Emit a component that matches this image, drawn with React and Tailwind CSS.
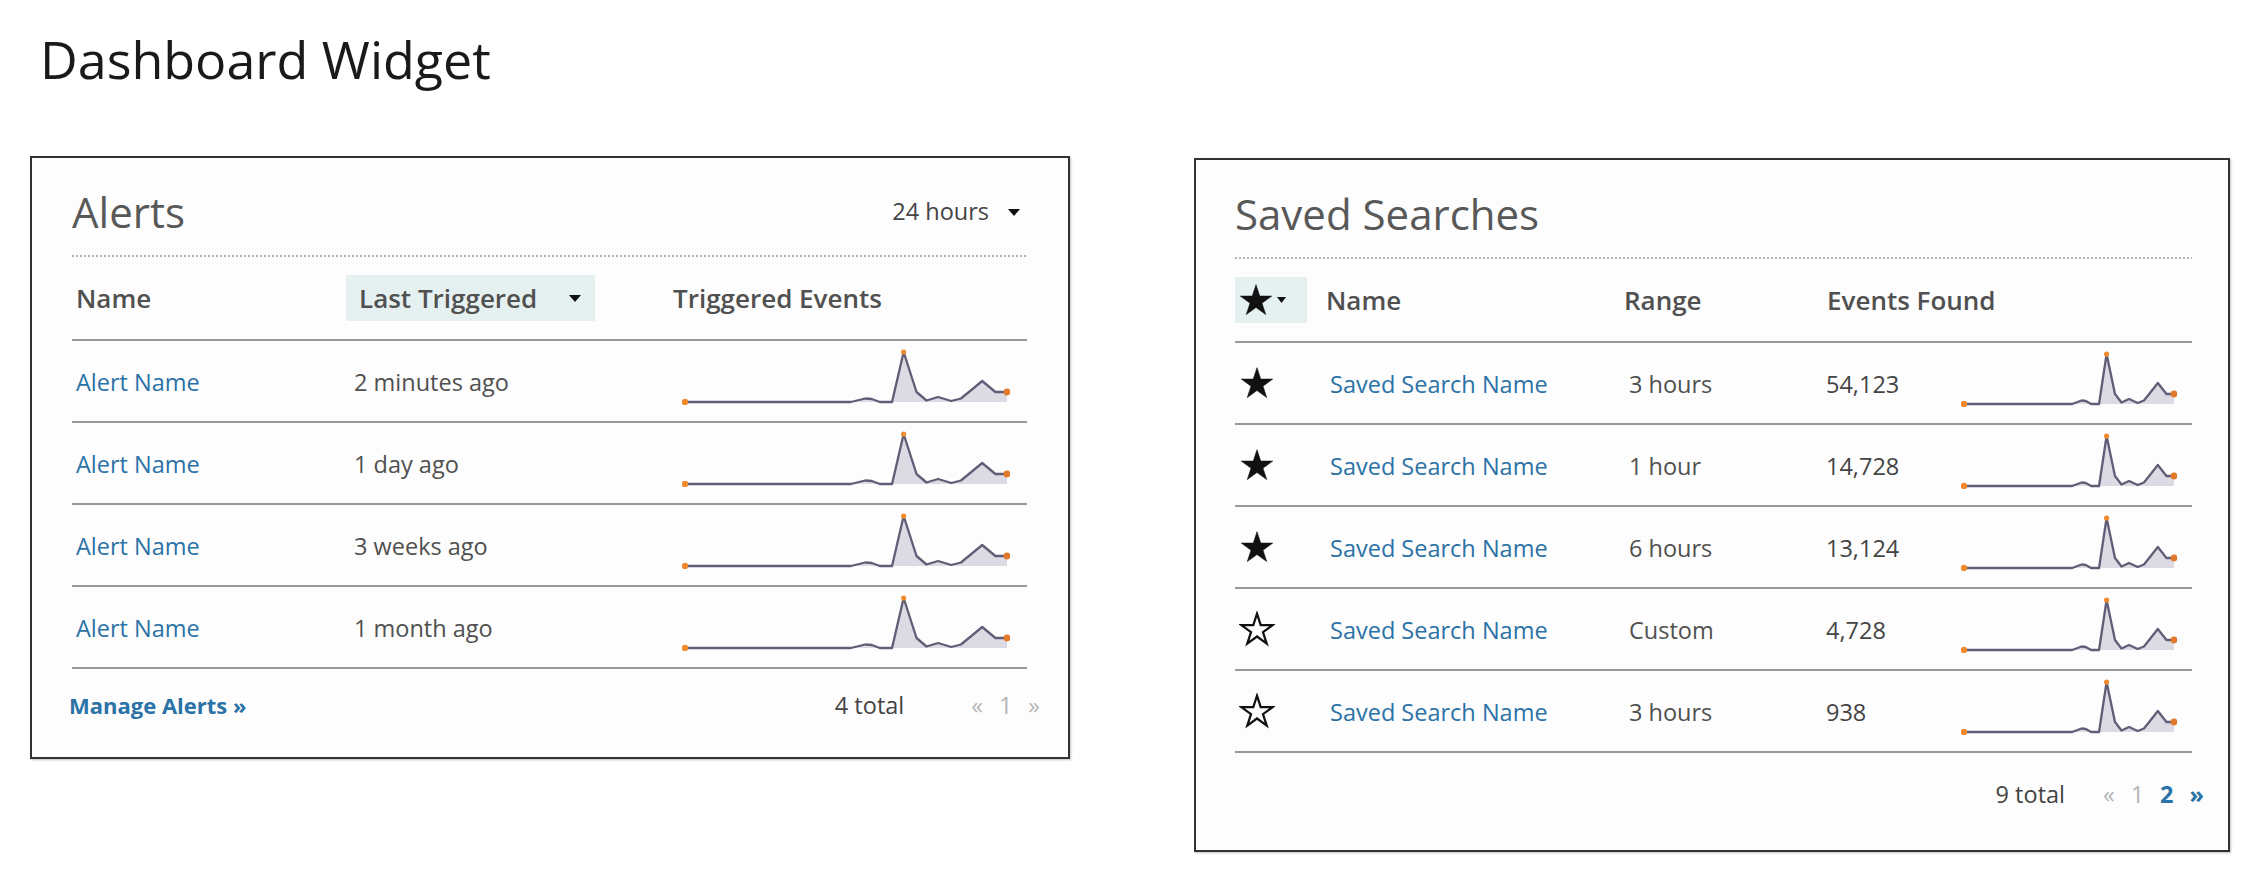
import React from 'react';

const SPARK = [
  [0, 1], [0.515, 1], [0.56, 0.93], [0.58, 0.94], [0.605, 1], [0.643, 1],
  [0.679, 0], [0.719, 0.8], [0.75, 0.97], [0.786, 0.9], [0.827, 0.98],
  [0.857, 0.93], [0.893, 0.74], [0.923, 0.58], [0.964, 0.8], [1, 0.8],
];

function Sparkline({ width }) {
  const h = 56;
  const pts = SPARK.map(([x, y]) => [3 + x * (width - 6), 3 + y * (h - 6)]);
  const line = pts.map((p) => p.join(',')).join(' ');
  const base = h - 3;
  const fill = `${pts[0][0]},${base} ${line} ${pts[pts.length - 1][0]},${base}`;
  const peak = pts[6];
  const end = pts[pts.length - 1];
  return (
    <svg width={width} height={h} viewBox={`0 0 ${width} ${h}`}>
      <polygon points={fill} fill="#dcdae2" />
      <polyline points={line} fill="none" stroke="#615d77" strokeWidth="2.3" strokeLinejoin="round" />
      <circle cx={pts[0][0]} cy={pts[0][1]} r="3.2" fill="#f08a2c" />
      <circle cx={peak[0]} cy={peak[1]} r="2.6" fill="#f08a2c" />
      <circle cx={end[0]} cy={end[1]} r="3.4" fill="#e2782a" />
    </svg>
  );
}

function Caret({ small }) {
  return small ? (
    <svg width="9" height="6" viewBox="0 0 9 6">
      <path d="M0 0h9L4.5 6z" fill="#111" />
    </svg>
  ) : (
    <svg width="12" height="7" viewBox="0 0 12 7">
      <path d="M0 0h12L6 7z" fill="#111" />
    </svg>
  );
}

function Star({ filled, size = 36 }) {
  return (
    <svg width={size} height={size} viewBox="0 0 24 24">
      <path
        d="M12 1.8L14.47 9.4L22.46 9.4L15.99 14.1L18.47 21.7L12 17L5.53 21.7L8.01 14.1L1.54 9.4L9.53 9.4Z"
        fill={filled ? '#111' : 'none'}
        stroke="#111"
        strokeWidth={filled ? 0.4 : 1.5}
        strokeLinejoin="miter"
      />
    </svg>
  );
}

function Dotted() {
  return <div className="mt-[22px] h-[2px] bg-[linear-gradient(to_right,#b3b3b3_2px,transparent_2px)] bg-[length:4px_2px] bg-repeat-x" />;
}

const alerts = ['2 minutes ago', '1 day ago', '3 weeks ago', '1 month ago'];

function AlertsWidget() {
  return (
    <div className="w-[1040px] border-2 border-[#333] bg-[#fdfdfd] pl-[40px] pr-[41px] pt-[33px] pb-[36px] shadow-[1px_1px_2px_rgba(0,0,0,0.25)]">
      <div className="flex items-center justify-between">
        <h2 className="text-[42px] leading-none text-[#585858]">Alerts</h2>
        <button className="flex items-center gap-[19px] pr-[7px] text-[23.5px] text-[#444]">
          24 hours <Caret />
        </button>
      </div>
      <Dotted />
      <div className="flex h-[84px] items-center border-b-2 border-[#999] text-[26px] font-semibold text-[#505050]">
        <div className="w-[274px] pl-[4px]">Name</div>
        <div className="flex h-[46px] w-[249px] items-center justify-between bg-[#e5f1f1] pl-[13px] pr-[14px]">
          Last Triggered <Caret />
        </div>
        <div className="pl-[78px]">Triggered Events</div>
      </div>
      {alerts.map((t) => (
        <div key={t} className="flex h-[82px] border-b-2 border-[#999] text-[23.5px]">
          <div className="flex w-[274px] items-center pl-[4px] pt-[3px] text-[#2b72a7]">Alert Name</div>
          <div className="flex w-[327px] items-center pl-[8px] pt-[3px] text-[#505050]">{t}</div>
          <div className="flex items-end pb-[16px] pl-[9px]">
            <Sparkline width={328} />
          </div>
        </div>
      ))}
      <div className="flex items-center pt-[20px] text-[23.5px] leading-[32px]">
        <a className="-ml-[3px] text-[22px] font-bold text-[#2b72a7]">Manage Alerts »</a>
        <span className="ml-auto text-[#444]">4 total</span>
        <div className="-mr-[13px] ml-[67px] flex gap-[16px] text-[#b5b5b5]">
          <span>«</span>
          <span>1</span>
          <span>»</span>
        </div>
      </div>
    </div>
  );
}

const searches = [
  { fav: true, range: '3 hours', count: '54,123' },
  { fav: true, range: '1 hour', count: '14,728' },
  { fav: true, range: '6 hours', count: '13,124' },
  { fav: false, range: 'Custom', count: '4,728' },
  { fav: false, range: '3 hours', count: '938' },
];

function SavedSearchesWidget() {
  return (
    <div className="ml-[124px] mt-[2px] w-[1036px] border-2 border-[#333] bg-[#fdfdfd] pl-[39px] pr-[36px] pt-[33px] pb-[40px] shadow-[1px_1px_2px_rgba(0,0,0,0.25)]">
      <h2 className="text-[42px] leading-none text-[#585858]">Saved Searches</h2>
      <Dotted />
      <div className="flex h-[84px] items-center border-b-2 border-[#999] text-[26px] font-semibold text-[#505050]">
        <div className="flex h-[46px] w-[72px] items-center gap-[3px] bg-[#e5f1f1] pl-[3px]">
          <Star filled size={36} />
          <Caret small />
        </div>
        <div className="w-[304px] pl-[19px]">Name</div>
        <div className="w-[205px] pl-[13px]">Range</div>
        <div className="pl-[11px]">Events Found</div>
      </div>
      {searches.map((s, i) => (
        <div key={i} className="flex h-[82px] border-b-2 border-[#999] text-[23.5px]">
          <div className="flex w-[72px] items-center pl-[4px]">
            <Star filled={s.fav} />
          </div>
          <div className="flex w-[304px] items-center pl-[23px] pt-[3px] text-[#2b72a7]">Saved Search Name</div>
          <div className="flex w-[205px] items-center pl-[18px] pt-[3px] text-[#505050]">{s.range}</div>
          <div className="flex w-[145px] items-center pl-[10px] pt-[3px] text-[#444]">{s.count}</div>
          <div className="flex items-end pb-[16px]">
            <Sparkline width={216} />
          </div>
        </div>
      ))}
      <div className="flex items-center justify-end pt-[25px] text-[23.5px] leading-[32px]">
        <span className="text-[#444]">9 total</span>
        <div className="-mr-[12px] ml-[38px] flex gap-[16px]">
          <span className="text-[#b5b5b5]">«</span>
          <span className="text-[#b5b5b5]">1</span>
          <span className="font-bold text-[#2b72a7]">2</span>
          <span className="font-bold text-[#2b72a7]">»</span>
        </div>
      </div>
    </div>
  );
}

export default function App() {
  return (
    <div className="min-h-screen bg-white font-['Open_Sans',sans-serif] text-[#555]">
      <h1 className="pl-[40px] pt-[33px] text-[52px] leading-none text-[#1a1a1a]">Dashboard Widget</h1>
      <div className="mt-[71px] flex items-start pl-[30px]">
        <AlertsWidget />
        <SavedSearchesWidget />
      </div>
    </div>
  );
}
